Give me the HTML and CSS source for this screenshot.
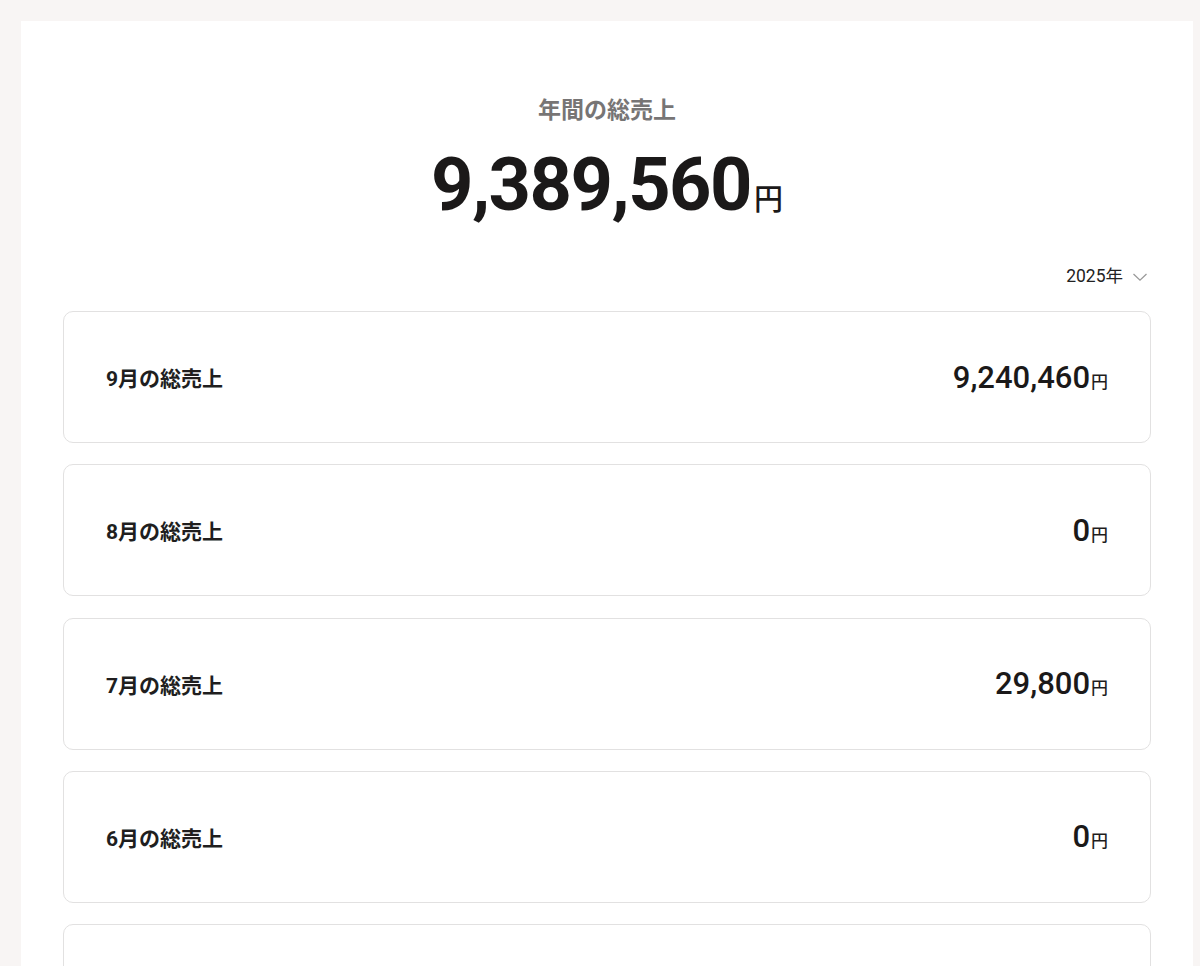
FILE: index.html
```html
<!DOCTYPE html>
<html lang="ja">
<head>
<meta charset="utf-8">
<title>年間の総売上</title>
<link rel="stylesheet" href="styles.css">
</head>
<body>
<main class="panel">
  <section class="summary">
    <h1 class="summary-title">年間の総売上</h1>
    <p class="summary-total"><span class="total-num">9,389,560</span><span class="total-unit">円</span></p>
  </section>
  <div class="year-row">
    <button class="year-select" type="button">2025年
      <svg class="chev" width="16" height="10" viewBox="0 0 16 10" aria-hidden="true"><path d="M1.5 2 L8 8.2 L14.5 2" fill="none" stroke="#9a9a9a" stroke-width="1.3"/></svg>
    </button>
  </div>
  <ul class="months">
    <li class="month-card"><span class="month-label">9月の総売上</span><span class="month-value"><span class="val-num">9,240,460</span><span class="val-unit">円</span></span></li>
    <li class="month-card"><span class="month-label">8月の総売上</span><span class="month-value"><span class="val-num">0</span><span class="val-unit">円</span></span></li>
    <li class="month-card"><span class="month-label">7月の総売上</span><span class="month-value"><span class="val-num">29,800</span><span class="val-unit">円</span></span></li>
    <li class="month-card"><span class="month-label">6月の総売上</span><span class="month-value"><span class="val-num">0</span><span class="val-unit">円</span></span></li>
    <li class="month-card month-card-last"></li>
  </ul>
</main>
</body>
</html>
```

FILE: styles.css
```css
* { box-sizing: border-box; }
html, body { margin: 0; padding: 0; }
body {
  background: #f8f5f4;
  font-family: Roboto, "Noto Sans CJK JP", sans-serif;
  color: #1f1d1d;
}
.panel {
  margin: 21px 7px 0 21px;
  background: #ffffff;
  padding: 74px 42px 0;
  min-height: 1100px;
}
.summary { text-align: center; }
.summary-title {
  margin: 0;
  font-size: 23px;
  line-height: 32px;
  font-weight: 700;
  color: #777575;
}
.summary-total {
  margin: 13px 0 0;
  line-height: 90px;
  height: 90px;
}
.total-num {
  font-size: 74px;
  font-weight: 700;
  letter-spacing: -1.5px;
  color: #1b1919;
}
.total-unit {
  font-family: "Noto Sans CJK JP", sans-serif;
  font-size: 29px;
  font-weight: 500;
  margin-left: 3px;
  color: #1b1919;
}
.year-row {
  display: flex;
  justify-content: flex-end;
  margin-top: 33px;
  height: 26px;
}
.year-select {
  display: flex;
  align-items: center;
  gap: 9px;
  border: 0;
  background: none;
  padding: 0 3px 0 0;
  font-family: inherit;
  font-size: 17.5px;
  line-height: 24px;
  color: #222;
  cursor: pointer;
}
.chev { display: block; margin-top: 1px; }
.months {
  list-style: none;
  margin: 22px 0 0;
  padding: 0;
  display: flex;
  flex-direction: column;
  gap: 21.25px;
}
.month-card {
  height: 132px;
  border: 1px solid #e2e1e1;
  border-radius: 10px;
  padding: 0 42px;
  display: flex;
  align-items: center;
  justify-content: space-between;
}
.month-label {
  font-size: 21px;
  font-weight: 700;
  color: #201e1e;
}
.month-value { display: flex; align-items: baseline; }
.val-num {
  font-size: 31px;
  font-weight: 500;
  color: #1b1919;
}
.val-unit {
  font-family: "Noto Sans CJK JP", sans-serif;
  font-size: 17px;
  font-weight: 500;
  margin-left: 1px;
}
```
